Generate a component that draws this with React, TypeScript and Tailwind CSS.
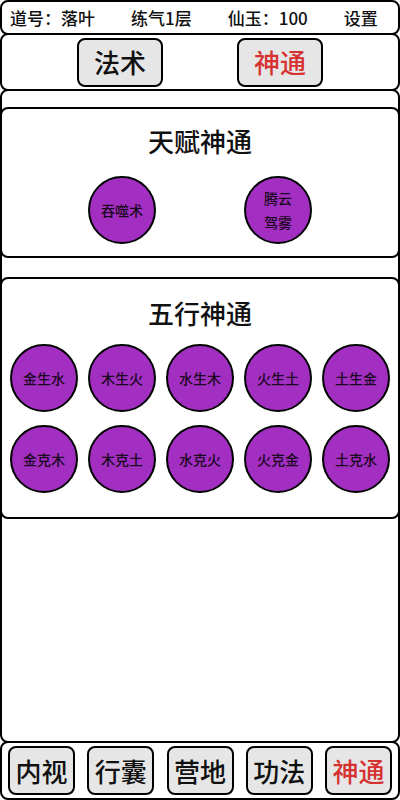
import React from "react";

const font = { fontFamily: '"Noto Sans CJK SC", "Noto Sans", sans-serif' };

function Circle({ children }: { children: React.ReactNode }) {
  return (
    <div className="w-[68px] h-[68px] rounded-full bg-[#a22fc2] border-2 border-black flex items-center justify-center text-center text-[14px] leading-[24px] font-medium text-[#1a0820]">
      {children}
    </div>
  );
}

function Btn({ label, active, w }: { label: string; active?: boolean; w: string }) {
  return (
    <div
      className={`${w} h-[49px] rounded-lg border-2 border-black bg-[#e6e6e6] flex items-center justify-center text-[26px] leading-none font-medium ${
        active ? "text-[#d63232]" : "text-[#111]"
      }`}
    >
      {label}
    </div>
  );
}

export default function App() {
  const row1 = ["金生水", "木生火", "水生木", "火生土", "土生金"];
  const row2 = ["金克木", "木克土", "水克火", "火克金", "土克水"];
  const bottom = ["内视", "行囊", "营地", "功法", "神通"];
  return (
    <div className="w-[400px] h-[800px] flex flex-col bg-white text-black overflow-hidden" style={font}>
      <div className="h-[35px] shrink-0 border-2 border-black rounded-lg flex items-center pl-[8px] gap-[36px] text-[17px] font-medium text-[#111]">
        <span>道号：落叶</span>
        <span>练气1层</span>
        <span>仙玉：100</span>
        <span>设置</span>
      </div>
      <div className="h-[58px] -mt-[2px] shrink-0 border-2 border-black rounded-lg flex items-center justify-center gap-[74px]">
        <Btn label="法术" w="w-[86px]" />
        <Btn label="神通" w="w-[86px]" active />
      </div>
      <div className="flex-1 -mt-[2px] border-2 border-black rounded-lg pt-[16px]">
        <div className="-mx-[2px] border-2 border-black rounded-lg flex flex-col items-center pt-[14px] pb-[12px]">
          <div className="text-[26px] leading-[36px] font-medium text-[#111]">天赋神通</div>
          <div className="flex justify-center gap-[88px] mt-[17px]">
            <Circle>吞噬术</Circle>
            <Circle>
              <span>
                腾云
                <br />
                驾雾
              </span>
            </Circle>
          </div>
        </div>
        <div className="-mx-[2px] mt-[19px] border-2 border-black rounded-lg flex flex-col items-center pt-[16px] pb-[24px]">
          <div className="text-[26px] leading-[36px] font-medium text-[#111]">五行神通</div>
          <div className="grid grid-cols-5 w-full px-[3px] mt-[13px] gap-y-[13px] justify-items-center">
            {row1.map((t) => (
              <Circle key={t}>{t}</Circle>
            ))}
            {row2.map((t) => (
              <Circle key={t}>{t}</Circle>
            ))}
          </div>
        </div>
      </div>
      <div className="h-[59px] -mt-[2px] shrink-0 border-2 border-black rounded-lg flex items-center justify-between px-[6px]">
        {bottom.map((b, i) => (
          <Btn key={b} label={b} w="w-[67px]" active={i === 4} />
        ))}
      </div>
    </div>
  );
}
